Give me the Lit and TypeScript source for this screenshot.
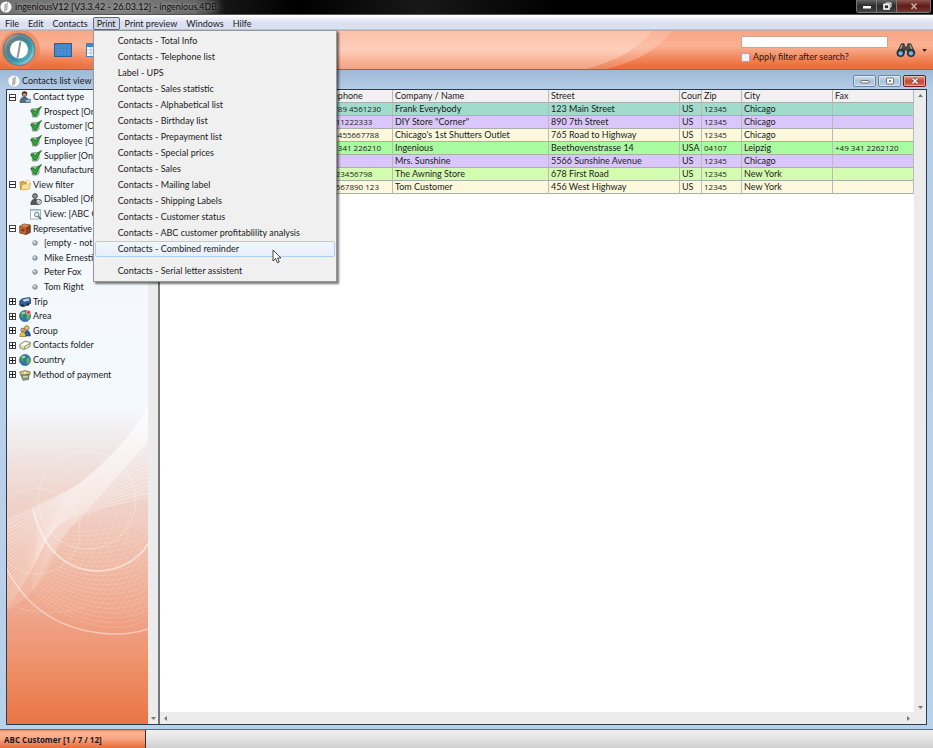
import { LitElement, html, css, svg, nothing } from "lit";
import { customElement, property } from "lit/decorators.js";
import { classMap } from "lit/directives/class-map.js";

const MENUS = ["File", "Edit", "Contacts", "Print", "Print preview", "Windows", "Hilfe"];

const PRINT_ITEMS = [
  "Contacts - Total Info",
  "Contacts - Telephone list",
  "Label - UPS",
  "Contacts - Sales statistic",
  "Contacts - Alphabetical list",
  "Contacts - Birthday list",
  "Contacts - Prepayment list",
  "Contacts - Special prices",
  "Contacts - Sales",
  "Contacts - Mailing label",
  "Contacts - Shipping Labels",
  "Contacts - Customer status",
  "Contacts - ABC customer profitablility analysis",
  "Contacts - Combined reminder",
  "Contacts - Serial letter assistent",
];

interface Node {
  icon: string;
  label: string;
  level: number;
  open?: boolean;
}

const TREE: Node[] = [
  { icon: "person", label: "Contact type", level: 0, open: true },
  { icon: "check", label: "Prospect [On]", level: 1 },
  { icon: "check", label: "Customer [On]", level: 1 },
  { icon: "check", label: "Employee [On]", level: 1 },
  { icon: "check", label: "Supplier [On]", level: 1 },
  { icon: "check", label: "Manufacturer", level: 1 },
  { icon: "folder", label: "View filter", level: 0, open: true },
  { icon: "disabled", label: "Disabled [Off]", level: 1 },
  { icon: "view", label: "View: [ABC Cu", level: 1 },
  { icon: "box", label: "Representative", level: 0, open: true },
  { icon: "dot", label: "[empty - not a", level: 1 },
  { icon: "dot", label: "Mike Ernesti", level: 1 },
  { icon: "dot", label: "Peter Fox", level: 1 },
  { icon: "dot", label: "Tom Right", level: 1 },
  { icon: "trip", label: "Trip", level: 0, open: false },
  { icon: "area", label: "Area", level: 0, open: false },
  { icon: "group", label: "Group", level: 0, open: false },
  { icon: "papers", label: "Contacts folder", level: 0, open: false },
  { icon: "globe", label: "Country", level: 0, open: false },
  { icon: "payment", label: "Method of payment", level: 0, open: false },
];

const COLUMNS = ["", "Telephone", "Company / Name", "Street", "Coun", "Zip", "City", "Fax"];
const NUMERIC = ["Telephone", "Zip", "Fax"];

const ROWS: { tone: string; cells: string[] }[] = [
  { tone: "teal", cells: ["", "12 789 4561230", "Frank Everybody", "123 Main Street", "US", "12345", "Chicago", ""] },
  { tone: "violet", cells: ["", "01111222333", "DIY Store \"Corner\"", "890 7th Street", "US", "12345", "Chicago", ""] },
  { tone: "cream", cells: ["", "22 4455667788", "Chicago's 1st Shutters Outlet", "765 Road to Highway", "US", "12345", "Chicago", ""] },
  { tone: "green", cells: ["", "+49 341 226210", "Ingenious", "Beethovenstrasse 14", "USA", "04107", "Leipzig", "+49 341 2262120"] },
  { tone: "violet", cells: ["", "", "Mrs. Sunshine", "5566 Sunshine Avenue", "US", "12345", "Chicago", ""] },
  { tone: "lime", cells: ["", "00123456798", "The Awning Store", "678 First Road", "US", "12345", "New York", ""] },
  { tone: "cream", cells: ["", "234567890 123", "Tom Customer", "456 West Highway", "US", "12345", "New York", ""] },
];

const globe = svg`
  <circle cx="6" cy="6" r="5.500" fill="#2c78b4" stroke="#1d4a74" stroke-width=".6"/>
  <path d="M2 3 Q4 .8 6.500 1.200 L6 3.500 4 5 4.500 7 3 8 1.500 6Z" fill="#4fa63c"/>
  <path d="M7.500 4.500 L10.500 4 11 7 9 10 7.500 8.500Z" fill="#63b648"/>
  <ellipse cx="4.500" cy="3" rx="2" ry="1.200" fill="#fff" opacity=".45"/>`;

const ICONS: Record<string, unknown> = {
  person: svg`
    <circle cx="5.500" cy="3" r="2.500" fill="#c79a6a" stroke="#4a3524" stroke-width=".7"/>
    <path d="M3 2.500 Q5 -.5 8 2 L7.500 3 Q5.500 1.500 3.200 3.200Z" fill="#3b2a1e"/>
    <path d="M1 11.500 Q1 6.300 5 6 Q9 6 10.500 11.500Z" fill="#4f6b80" stroke="#2a3d4c" stroke-width=".6"/>
    <path d="M6.500 8.500 L11.500 8 11.500 11.500 6 11.500Z" fill="#8fb8d6" stroke="#34566e" stroke-width=".5"/>`,
  check: svg`
    <path d="M1.500 3 L9 2.500 9 9 7 11 2.500 11Z" fill="#b9d3b9" stroke="#5d7a5d" stroke-width=".7"/>
    <path d="M.5 4.800 L3.600 3.800 5 6 Q7.500 2 11.600 .4 Q8 5.200 6.300 10 L4 10 Q2.800 7 .5 4.800Z" fill="#2fa53a" stroke="#0f5c1b" stroke-width=".7"/>`,
  folder: svg`
    <path d="M1 3 L4.500 2 5.500 3.300 9.500 2.700 10 9.500 1.500 10.500Z" fill="#e2ac34" stroke="#8d6a1c" stroke-width=".5"/>
    <path d="M3 5.500 L11.500 4 10.500 10 2 11Z" fill="#fbe29a" stroke="#b98a28" stroke-width=".5"/>
    <path d="M7 1 L10.500 1.500 11 5 8 5.500Z" fill="#fff6cf" stroke="#c8a857" stroke-width=".4"/>`,
  disabled: svg`
    <circle cx="5" cy="3" r="2.400" fill="#8c8c8c" stroke="#333" stroke-width=".8"/>
    <path d="M.8 11.500 Q1 6.300 5 6 Q8 6 9 11.500Z" fill="#555" stroke="#2b2b2b" stroke-width=".6"/>
    <circle cx="8.800" cy="8.800" r="2.600" fill="#eee" stroke="#444" stroke-width=".8"/>
    <path d="M7 10.600 L10.600 7" stroke="#444" stroke-width=".8"/>`,
  view: svg`
    <rect x=".5" y="1.500" width="10" height="9.500" fill="#fff" stroke="#8da0ae" stroke-width=".8"/>
    <path d="M1 2.600 H10.500" stroke="#b7cadb" stroke-width="1.200"/>
    <circle cx="6.800" cy="6.600" r="2.300" fill="#dff0f0" stroke="#4b6464" stroke-width=".8"/>
    <path d="M8.300 8.300 L11 11.200" stroke="#4b6464" stroke-width="1.300"/>`,
  box: svg`
    <path d="M.8 3 L5 1 11.300 2 11.300 9.500 7 11.500 .8 10Z" fill="#8d451f" stroke="#4e2511" stroke-width=".7"/>
    <path d="M.8 3 L7 4.200 7 11.500 .8 10Z" fill="#b9642f"/>
    <path d="M.8 3 L5 1 11.300 2 7 4.200Z" fill="#d08b52"/>
    <path d="M2.500 6 L5.300 6.500 5.300 8.500 2.500 8Z" fill="#7b3a1a"/>`,
  dot: svg`
    <circle cx="5" cy="6" r="2.300" fill="#9fb0b8" stroke="#66757d" stroke-width=".7"/>
    <circle cx="4.400" cy="5.300" r="1" fill="#eef6f8"/>`,
  trip: svg`
    <path d="M.7 5 L3 2.800 10.500 1.500 11.500 3 11.500 7.500 5 10.500 .7 9.300Z" fill="#2f6295" stroke="#16314e" stroke-width=".7"/>
    <path d="M3.500 3.600 L10 2.300 10.500 4.500 5 5.800Z" fill="#b6d4ec"/>
    <circle cx="3.300" cy="9.500" r="1.300" fill="#222"/><circle cx="8.800" cy="8.500" r="1.300" fill="#222"/>`,
  area: svg`${globe}<circle cx="9.500" cy="2.500" r="2.200" fill="#e2493b" stroke="#fff" stroke-width=".5"/>`,
  group: svg`
    <circle cx="7.800" cy="3" r="2.300" fill="#e4c069" stroke="#5e4a1a" stroke-width=".6"/>
    <path d="M4.800 11 Q5 5.500 8 5.500 Q11 5.500 11.500 11Z" fill="#2d5f97" stroke="#183555" stroke-width=".5"/>
    <circle cx="3.600" cy="5" r="1.900" fill="#d8a878" stroke="#4b3420" stroke-width=".5"/>
    <path d="M.8 11.500 Q1 7 3.700 7 Q6.500 7 6.800 11.500Z" fill="#e0c14c" stroke="#6a5718" stroke-width=".5"/>`,
  papers: svg`
    <path d="M.7 5.500 L6 2 11.500 3.500 10.500 8 5 10.500 1 9Z" fill="#dfe3c0" stroke="#6c6c4a" stroke-width=".7"/>
    <path d="M2.500 5.700 L6.500 3.200 10 4.200 6 7Z" fill="#fff"/>
    <path d="M5 10.500 L6 7 11.300 4.300" fill="none" stroke="#8c8743" stroke-width=".8"/>`,
  globe,
  payment: svg`
    <path d="M.7 3 L6 1.500 11.300 3 10.500 6 2 6.500Z" fill="#d8c37a" stroke="#5f5428" stroke-width=".6"/>
    <path d="M2 6 L10 5.500 9.500 10.500 4 11.300Z" fill="#8ea07a" stroke="#43503a" stroke-width=".6"/>
    <circle cx="6" cy="4" r="1.300" fill="#f7ecc0"/><path d="M4 8 L8.500 7.500" stroke="#e8edd8" stroke-width="1"/>`,
};

const icon = (name: string) => html`<svg class="icon" viewBox="0 0 12 12" aria-hidden="true">${ICONS[name]}</svg>`;

const coin = html`<svg class="coin" viewBox="0 0 12 12" aria-hidden="true">
  <circle cx="6" cy="6" r="5.600" fill="#fff"/>
  <path d="M7.200 1.500 L6.600 9.500 M5.300 2.800 L4.800 10.600" stroke="#777" stroke-width=".9" fill="none"/>
</svg>`;

const range = (n: number) => Array.from({ length: n }, (_, i) => i);

@customElement("contact-tree")
class ContactTree extends LitElement {
  @property({ attribute: false }) nodes: Node[] = [];

  static styles = css`
    :host { display: block; position: relative; background: linear-gradient(#f4f8fd 0, #f4f9fe 50%, #f0e6e6 57%, #f0d0c6 66%, #f0b6a0 76%, #ef9c7e 86%, #ee9068 91%, #ea7446 100%); overflow: hidden; }
    .art { position: absolute; left: 0; bottom: 0; width: 100%; height: 345px; }
    .tree { position: relative; display: grid; grid-auto-rows: 1fr; height: 292px; margin: 0; padding: 0; list-style: none; }
    .node { display: flex; align-items: center; gap: 3px; padding-left: 2px; line-height: 10px; white-space: nowrap; }
    .child { padding-left: 23px; gap: 2px; }
    .toggle { box-sizing: border-box; flex: none; width: 7px; height: 7px; padding: 0; border: 1px solid #444; background: linear-gradient(#222, #222) center / 5px 1px no-repeat #fff; }
    .closed { background: linear-gradient(#222, #222) center / 5px 1px no-repeat, linear-gradient(#222, #222) center / 1px 5px no-repeat, #fff; }
    .icon { flex: none; width: 12px; height: 12px; }
    .toggle + .icon { margin-right: -1px; }
  `;

  render() {
    return html`
      <svg class="art" viewBox="0 0 141 345" preserveAspectRatio="none" fill="none" stroke="#fff" aria-hidden="true">
        <defs>
          <linearGradient id="veil" x1="1" y1="0" x2=".3" y2="1">
            <stop offset="0" stop-color="#fff" stop-opacity=".6"/>
            <stop offset=".5" stop-color="#fff" stop-opacity=".3"/>
            <stop offset="1" stop-color="#fff" stop-opacity=".1"/>
          </linearGradient>
        </defs>
        <path d="M141 28 Q112 76 72 105 Q48 118 0 138 L0 232 Q30 214 44 184 Q54 160 64 148 Q90 128 141 116Z" fill="#fff" opacity=".12" stroke="none"/>
        <path d="M141 28 Q112 76 72 105 Q48 118 28 127 L30 160 L24 214 Q34 200 44 178 Q54 160 64 148 Q90 122 141 62Z" fill="url(#veil)" stroke="none"/>
        ${range(22).map((i) => svg`<path opacity=".45" stroke-width=".8" d="M141 ${34 + i * 4} C${116 - i} ${66 + i * 3} ${90 - i} ${90 + i * 2} ${72 - i} ${105 + i * 2} S${30} ${128 + i * 3} 0 ${142 + i * 4}"/>`)}
        ${range(22).map((i) => svg`<path opacity=".18" stroke-width=".7" d="M${8 + i * 7} 236 Q${62 + i * 5} 200 ${76 + i * 7} 132"/>`)}
        ${range(22).map((i) => svg`<path opacity=".2" stroke-width=".7" d="M${46 - i} ${150 + i * 3} Q90 ${160 + i * 5} 141 ${136 + i * 5}"/>`)}
        <circle cx="30" cy="152" r="43" opacity=".22"/>
        <circle cx="28" cy="112" r="40" opacity=".12"/>
        <circle cx="80" cy="121" r="49" opacity=".3"/>
        <path d="M26 130 Q40 188 88 192 Q125 192 143 162" stroke-width="1.800" opacity=".5"/>
        <path d="M0 190 Q25 240 80 252 Q115 259 141 250" stroke-width="1.500" opacity=".45"/>
        <path d="M0 226 Q40 240 78 228" opacity=".15"/>
      </svg>
      <ul class="tree">
        ${this.nodes.map(
          (n) => html`<li class=${classMap({ node: true, child: n.level > 0 })}>
            ${n.level === 0
              ? html`<button class=${classMap({ toggle: true, closed: !n.open })} aria-label=${`Toggle ${n.label}`}></button>`
              : nothing}
            ${icon(n.icon)}<span>${n.label}</span>
          </li>`,
        )}
      </ul>
    `;
  }
}

@customElement("contact-table")
class ContactTable extends LitElement {
  static styles = css`
    :host { display: block; background: #fff; min-width: 0; }
    .table { width: 100%; table-layout: fixed; border-collapse: separate; border-spacing: 0; }
    th, td { box-sizing: border-box; height: 13px; padding: 0 0 1px 2px; border-right: 1px solid #b9b9b9; border-bottom: 1px solid #a9b0a9; text-align: left; font-weight: 400; line-height: 11px; white-space: nowrap; overflow: hidden; }
    th { background: #f2f0f0; }
    .num { font-family: "Open Sans", sans-serif; font-size: 8px; }
    .c0 { width: 160px; }
    .c1 { width: 73px; }
    .c3 { width: 131px; }
    .c4 { width: 22px; padding-left: 1px; }
    .c5 { width: 40px; }
    .c6 { width: 91px; }
    .c7 { width: 81px; }
    .teal { background: #9fdccb; }
    .violet { background: #dac6fb; }
    .cream { background: #fbf8dc; }
    .green { background: #a9fb9f; }
    .lime { background: #d3fcae; }
  `;

  render() {
    return html`<table class="table">
      <thead><tr>${COLUMNS.map((c, i) => html`<th class=${`c${i}`} scope="col">${c}</th>`)}</tr></thead>
      <tbody>
        ${ROWS.map(
          (r) => html`<tr class=${r.tone}>
            ${r.cells.map((c, i) => html`<td class=${classMap({ num: NUMERIC.includes(COLUMNS[i]) })}>${c}</td>`)}
          </tr>`,
        )}
      </tbody>
    </table>`;
  }
}

@customElement("app-root")
class AppRoot extends LitElement {
  static styles = css`
    :host { display: flex; flex-direction: column; min-height: 100vh; background: #b7d0ea; color: #1c1c1c; font: 9px/12px Lato, "Open Sans", sans-serif; }
    button, input { font: inherit; color: inherit; }
    button { cursor: default; }
    .titlebar { display: flex; align-items: center; gap: 3px; height: 15px; box-sizing: border-box; border-bottom: 1px solid #555; background: linear-gradient(90deg, #6f6f6f 0, #7d7d7d 120px, #666 195px, #151515 225px, #000 300px, #181818 420px, #000 60%, #000 100%); }
    .title { flex: 1; color: #0a0a0a; text-shadow: 0 0 4px #ccc; }
    .coin { flex: none; width: 12px; height: 12px; }
    .caption { display: flex; align-self: flex-start; margin-right: 2px; border: 1px solid #777; border-top: 0; border-radius: 0 0 3px 3px; overflow: hidden; }
    .cap { display: grid; place-items: center; width: 20px; height: 12px; padding: 0; border: 0; border-right: 1px solid #777; background: linear-gradient(#666, #2a2a2a 50%, #444); }
    .cap:last-child { width: 33px; border: 0; background: linear-gradient(#8d5550, #5f1b16 50%, #7a3832); }
    .glyph { width: 10px; height: 8px; }
    .menubar { position: relative; z-index: 2; display: flex; gap: 1px; height: 15px; padding-left: 1px; box-sizing: border-box; border-top: 2px solid #fff; background: linear-gradient(#f3f6fb, #dcdff0 50%, #d6e2f3); border-bottom: 1px solid #bfc3cf; }
    .slot { position: relative; }
    .menu { display: block; height: 13px; padding: 0 3px; border: 1px solid transparent; background: none; line-height: 10px; white-space: nowrap; }
    .menu.open { border-color: #5d6a82; border-radius: 2px; background: #d3d8e6; }
    .popup { position: absolute; left: 0; top: 13px; width: 244px; box-sizing: border-box; padding: 2px 1px; border: 1px solid #979797; background: #f0f0f0; box-shadow: 2px 2px 2px #0008; }
    .item { display: block; width: 100%; height: 16px; padding: 0 0 0 22px; border: 1px solid transparent; border-radius: 2px; background: none; text-align: left; line-height: 14px; white-space: nowrap; }
    .item.hot { border-color: #aed0f0; background: linear-gradient(#f2f6fb, #e8eff8); }
    .rule { height: 6px; }
    .toolbar { position: relative; display: flex; align-items: center; height: 40px; box-sizing: border-box; border-top: 1px solid #c9a79a; border-bottom: 1px solid #8c6a5c; background: linear-gradient(#f8a685, #fab294 40%, #f29068 65%, #eb6f3a 92%); }
    .swoosh { position: absolute; inset: 0; width: 100%; height: 100%; }
    .logo { position: relative; flex: none; width: 40px; height: 38px; }
    .tool { position: relative; width: 18px; height: 14px; margin-left: 14px; padding: 0; border: 0; background: none; }
    .tool svg { display: block; width: 18px; height: 14px; }
    .search { position: relative; margin-left: auto; width: 147px; display: flex; flex-direction: column; gap: 3px; padding-bottom: 1px; }
    .query { width: 100%; height: 12px; box-sizing: border-box; padding: 0 2px; border: 1px solid #d9a08a; background: #fff; }
    .apply { display: flex; align-items: center; gap: 3px; height: 12px; white-space: nowrap; }
    .box { appearance: none; width: 9px; height: 9px; margin: 0; border: 1px solid #a4a9ad; background: #f1f1f1; }
    .find { position: relative; display: flex; align-items: center; gap: 6px; margin: 0 6px 0 8px; padding: 0; border: 0; background: none; }
    .bino { width: 20px; height: 16px; }
    .tri { width: 5px; height: 3px; }
    .frame { flex: 1; display: flex; flex-direction: column; padding: 0 6px 4px; border-bottom: 1px solid #5a6d80; background: linear-gradient(#9db9d6, #b6cde8 20px, #b9d2ec); }
    .wintitle { display: flex; align-items: center; box-sizing: border-box; height: 19px; padding-top: 2px; gap: 2px; }
    .wintitle span { flex: 1; }
    .wintitle .coin { margin-left: 2px; }
    .win { display: grid; place-items: center; width: 23px; height: 12px; padding: 0; border: 1px solid #6d87a3; border-radius: 2px; background: linear-gradient(#d3e1f1, #a9c1dc 50%, #bdd3ea); box-shadow: inset 0 0 0 1px #ffffff66; }
    .win.x { margin-right: 1px; border-color: #6b201a; background: linear-gradient(#e8a091, #c8452f 50%, #d8705a); }
    .body { flex: 1; display: grid; grid-template-columns: 141px 12px minmax(0, 1fr) 12px; border: 1px solid #2d3c4c; background: #fff; }
    .vbar, .hbar { background: #ececec; display: flex; justify-content: space-between; align-items: center; }
    .vbar { flex-direction: column; padding: 3px 0; }
    .hbar { height: 12px; padding: 0 3px; }
    .first { border-right: 2px solid #777; justify-content: flex-end; }
    .arrow { width: 5px; height: 5px; }
    .list { display: flex; flex-direction: column; min-width: 0; }
    .fill { flex: 1; }
    .last { padding-bottom: 14px; }
    .status { display: flex; height: 18px; background: linear-gradient(#f0f0f0 0, #e6e6e6 40%, #cfcfcf); }
    .current { width: 146px; box-sizing: border-box; padding: 4px 0 0 4px; border-right: 1px solid #333; font: 700 8px/12px "Open Sans", sans-serif; background: linear-gradient(#e98a66 0, #fbb395 15%, #f8a583 50%, #ea7341 90%); }
    .pointer { position: absolute; left: 178px; top: 218px; width: 11px; height: 15px; }
  `;

  private arrow(d: string) {
    return html`<svg class="arrow" viewBox="0 0 5 5" aria-hidden="true"><path d=${d} fill="#777"/></svg>`;
  }

  private popup() {
    return html`<div class="popup" role="menu">
      ${PRINT_ITEMS.map(
        (t, i) => html`${i === PRINT_ITEMS.length - 1 ? html`<div class="rule"></div>` : nothing}<button
            class=${classMap({ item: true, hot: i === 13 })}
            role="menuitem"
          >${t}</button>`,
      )}
      <svg class="pointer" viewBox="0 0 11 15" aria-hidden="true">
        <path d="M1 1 V12 L3.600 9.600 5.500 13.800 7.300 13 5.500 9 H9Z" fill="#fff" stroke="#333" stroke-width=".9"/>
      </svg>
    </div>`;
  }

  render() {
    return html`
      <header class="titlebar">
        ${coin}<span class="title">ingeniousV12 [V3.3.42 - 26.03.12] - ingenious.4DB</span>
        <div class="caption">
          <button class="cap" aria-label="Minimize"><svg class="glyph" viewBox="0 0 10 8"><rect x="1" y="4" width="8" height="2.500" fill="#fff"/></svg></button>
          <button class="cap" aria-label="Restore"><svg class="glyph" viewBox="0 0 10 8"><path d="M4 2 V1 H9 V5 H8" fill="none" stroke="#fff"/><rect x="2" y="2.500" width="5" height="4.500" fill="none" stroke="#fff" stroke-width="1.600"/></svg></button>
          <button class="cap" aria-label="Close"><svg class="glyph" viewBox="0 0 10 8"><path d="M2.500 1.500 L7.500 7 M7.500 1.500 L2.500 7" stroke="#c9a7a3" stroke-width="1.600"/></svg></button>
        </div>
      </header>

      <nav class="menubar">
        ${MENUS.map(
          (m) => html`<div class="slot">
            <button class=${classMap({ menu: true, open: m === "Print" })}>${m}</button>
            ${m === "Print" ? this.popup() : nothing}
          </div>`,
        )}
      </nav>

      <div class="toolbar">
        <svg class="swoosh" viewBox="0 0 933 38" preserveAspectRatio="none" aria-hidden="true">
          <defs><linearGradient id="pale" x1="0" y1="0" x2="0" y2="1">
            <stop offset="0" stop-color="#fbc2aa"/><stop offset=".5" stop-color="#fdd0bd"/><stop offset="1" stop-color="#f3a486"/>
          </linearGradient>
          <linearGradient id="fade"><stop offset="0" stop-color="#fff" stop-opacity="0"/><stop offset=".35" stop-color="#fff"/></linearGradient>
          <mask id="m"><rect x="60" y="0" width="640" height="38" fill="url(#fade)"/></mask></defs>
          <g mask="url(#m)">
            <path d="M60 0 H672 Q650 28 606 38 H60Z" fill="url(#pale)" opacity=".5"/>
            <path d="M60 0 H652 Q632 26 586 38 H60Z" fill="url(#pale)" opacity=".9"/>
          </g>
        </svg>
        <svg class="logo" viewBox="0 0 40 38" aria-hidden="true">
          <defs><linearGradient id="ring" x1="0" y1="0" x2="1" y2="1">
            <stop offset="0" stop-color="#d8c0a4"/><stop offset=".3" stop-color="#6e8588"/><stop offset=".6" stop-color="#3a9fb6"/><stop offset="1" stop-color="#b5eef0"/>
          </linearGradient></defs>
          <circle cx="20" cy="19" r="20" fill="#ee7c4e" opacity=".6"/>
          <circle cx="19" cy="18.500" r="16" fill="url(#ring)" stroke="#5b6f73" stroke-width=".8"/>
          <circle cx="19" cy="18.500" r="11.500" fill="none" stroke="#2c6d80" stroke-width="3" opacity=".3"/>
          <circle cx="19" cy="18.500" r="9" fill="#fff"/>
          <path d="M21.500 10.500 L19.500 10.800 L16.500 27 L18.500 26.500Z" fill="#8d9294"/>
        </svg>
        <button class="tool" aria-label="List"><svg viewBox="0 0 18 14"><rect x=".5" y=".5" width="17" height="13" fill="#3f86c8" stroke="#2a609c"/><path d="M1 4 H17 M1 7 H17 M1 10 H17 M4 1 V13 M7.500 1 V13 M11 1 V13 M14.500 1 V13" stroke="#5a98d4" stroke-width=".5"/></svg></button>
        <button class="tool" aria-label="Form"><svg viewBox="0 0 18 14"><rect x=".5" y=".5" width="17" height="13" fill="#fff" stroke="#4a7fb0"/><rect x="1" y="1" width="16" height="3" fill="#3f86c8"/><path d="M1 7 H17 M1 10 H17 M5 4 V13 M9 4 V13" stroke="#7fb0dc" stroke-width=".7"/></svg></button>
        <div class="search">
          <input class="query" type="text" aria-label="Search" />
          <label class="apply"><input class="box" type="checkbox" />Apply filter after search?</label>
        </div>
        <button class="find" aria-label="Find">
          <svg class="bino" viewBox="0 0 20 16" aria-hidden="true">
            <path d="M5 2 L8 1.500 9 5 11 5 12 1.500 15 2 19 11 H12 L11 8 H9 L8 11 H1Z" fill="#4d4a42" stroke="#25211c" stroke-width=".6"/>
            <path d="M6 3 L4 8 M14 3 L16 8" stroke="#b5ae9b" stroke-width="1.200"/>
            <circle cx="4.600" cy="11" r="3.800" fill="#26415c" stroke="#1b1b1b" stroke-width=".6"/><circle cx="15" cy="11" r="3.800" fill="#26415c" stroke="#1b1b1b" stroke-width=".6"/>
            <circle cx="4.600" cy="11.300" r="2.100" fill="#78b4e0"/><circle cx="15" cy="11.300" r="2.100" fill="#78b4e0"/>
          </svg>
          <svg class="tri" viewBox="0 0 6 4" aria-hidden="true"><path d="M0 0 H6 L3 4Z" fill="#222"/></svg>
        </button>
      </div>

      <main class="frame">
        <div class="wintitle">
          ${coin}<span>Contacts list view [</span>
          <button class="win" aria-label="Minimize window"><svg class="glyph" viewBox="0 0 10 8"><rect x="1" y="3.500" width="8" height="2.500" rx="1" fill="#fff" stroke="#555" stroke-width=".8"/></svg></button>
          <button class="win" aria-label="Maximize window"><svg class="glyph" viewBox="0 0 10 8"><rect x="1.500" y="1" width="7" height="6" rx="1" fill="#fff" stroke="#555" stroke-width=".8"/><rect x="4" y="3.200" width="2" height="1.600" fill="#667"/></svg></button>
          <button class="win x" aria-label="Close window"><svg class="glyph" viewBox="0 0 10 8"><path d="M2.500 1.500 L7.500 6.500 M7.500 1.500 L2.500 6.500" stroke="#5b2a26" stroke-width="2.600"/><path d="M2.500 1.500 L7.500 6.500 M7.500 1.500 L2.500 6.500" stroke="#fff" stroke-width="1.700"/></svg></button>
        </div>
        <div class="body">
          <contact-tree .nodes=${TREE}></contact-tree>
          <div class="vbar first">${this.arrow("M0 1 H5 L2.500 4Z")}</div>
          <div class="list">
            <contact-table class="fill"></contact-table>
            <div class="hbar">${this.arrow("M4 0 V5 L1 2.500Z")}${this.arrow("M1 0 V5 L4 2.500Z")}</div>
          </div>
          <div class="vbar last">${this.arrow("M0 4 H5 L2.500 1Z")}${this.arrow("M0 1 H5 L2.500 4Z")}</div>
        </div>
      </main>

      <footer class="status"><div class="current">ABC Customer [1 / 7 / 12]</div></footer>
    `;
  }
}
